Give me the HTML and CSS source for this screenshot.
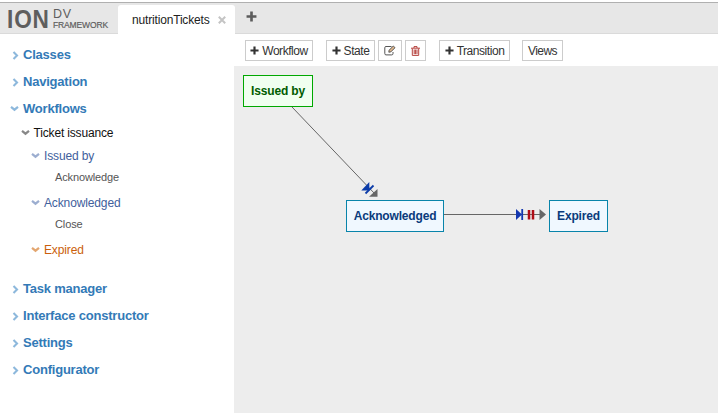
FILE: index.html
```html
<!DOCTYPE html>
<html lang="en">
<head>
<meta charset="utf-8">
<title>ION DV Framework</title>
<link rel="stylesheet" href="styles.css">
</head>
<body>
<svg class="defs" width="0" height="0">
  <symbol id="right" viewBox="0 0 8 9"><path d="M1.500 1 5 4.500 1.500 8" fill="none" stroke="currentColor" stroke-width="2.1"/></symbol>
  <symbol id="down" viewBox="0 0 9 8"><path d="M1 1.8 4.5 4.7 8 1.8" fill="none" stroke="currentColor" stroke-width="2.2"/></symbol>
  <symbol id="plus" viewBox="0 0 10 10"><path d="M5 .5v9M.5 5h9" fill="none" stroke="currentColor" stroke-width="2.4"/></symbol>
</svg>
<header class="topbar">
  <div class="logo"><span class="ion">ION</span><span class="sub"><span class="dv">DV</span><span class="fw">FRAMEWORK</span></span></div>
  <div class="tab"><span class="tab-name">nutritionTickets</span><svg class="close" viewBox="0 0 8 8"><path d="M.8.8 7.2 7.2M7.2.8.8 7.2"/></svg></div>
  <svg class="add"><use href="#plus"/></svg>
</header>
<div class="main">
  <nav class="sidebar">
    <div class="row top"><svg class="r"><use href="#right"/></svg><span>Classes</span></div>
    <div class="row top"><svg class="r"><use href="#right"/></svg><span>Navigation</span></div>
    <div class="row top"><svg class="d"><use href="#down"/></svg><span>Workflows</span></div>
    <div class="row flow"><svg class="d"><use href="#down"/></svg><span>Ticket issuance</span></div>
    <div class="row state"><svg class="d"><use href="#down"/></svg><span>Issued by</span></div>
    <div class="row trans"><span>Acknowledge</span></div>
    <div class="row state"><svg class="d"><use href="#down"/></svg><span>Acknowledged</span></div>
    <div class="row trans"><span>Close</span></div>
    <div class="row state current"><svg class="d"><use href="#down"/></svg><span>Expired</span></div>
    <div class="row top"><svg class="r"><use href="#right"/></svg><span>Task manager</span></div>
    <div class="row top"><svg class="r"><use href="#right"/></svg><span>Interface constructor</span></div>
    <div class="row top"><svg class="r"><use href="#right"/></svg><span>Settings</span></div>
    <div class="row top"><svg class="r"><use href="#right"/></svg><span>Configurator</span></div>
  </nav>
  <section class="content">
    <div class="toolbar">
      <div class="btn workflow"><svg class="p"><use href="#plus"/></svg>Workflow</div>
      <div class="btn state-btn"><svg class="p"><use href="#plus"/></svg>State</div>
      <div class="btn edit"><svg width="12" height="11" viewBox="0 0 12 11" fill="none" stroke="#555"><path d="M7.500 1.500H2Q.8 1.500.8 2.700V8.500Q.8 9.900 2 9.900H7.800Q9 9.900 9 8.500V7"/><path d="M4.800 7.200 5.200 5.200 9.300 1 11 2.700 6.800 6.900Z" fill="#e4b98c"/></svg></div>
      <div class="btn del"><svg width="9" height="10" viewBox="0 0 9 10" fill="none" stroke="#b5413c"><path d="M0 2.200H9M3 2V.6H6V2M1.300 2.500V9.400H7.700V2.500M3.200 3.500V8.200M4.600 3.500V8.200M6 3.500V8.200"/></svg></div>
      <div class="btn transition"><svg class="p"><use href="#plus"/></svg>Transition</div>
      <div class="btn views">Views</div>
    </div>
    <div class="canvas">
      <svg class="links" width="484" height="347" viewBox="234 66 484 347">
        <path d="M292 107 375 194M444 214.500H542" fill="none" stroke="#666"/>
        <path d="M377.500 189v7.800h-8.500z" fill="#666"/>
        <path d="M369.300 182v8.500h-8z" fill="#0b3ba8"/>
        <path d="M373.500 185.500 365.500 193.500" stroke="#0b3ba8" stroke-width="1.800"/>
        <path d="M516 209v11l6-5.500z" fill="#1438b0"/><path d="M522.200 209v11" stroke="#1438b0" stroke-width="1.800"/>
        <path d="M529 210v9.500M533 210v9.500" stroke="#b00c16" stroke-width="2.500"/>
        <path d="M539.500 209v11l6.500-5.500z" fill="#666"/>
      </svg>
      <div class="node start">Issued by</div>
      <div class="node ack">Acknowledged</div>
      <div class="node exp">Expired</div>
    </div>
  </section>
</div>
</body>
</html>
```

FILE: styles.css
```css
* { box-sizing: border-box; }
body { margin: 0; width: 718px; height: 413px; overflow: hidden; background: #fff; font-family: "Liberation Sans", Arial, sans-serif; font-size: 12px; color: #222; }
.defs { position: absolute; }
.topbar { height: 34px; padding-top: 3px; display: flex; background: linear-gradient(#fff 0 2px, #b0b0b0 2px 3px, #e7e7e7 3px); border-bottom: 1px solid #dadada; }
.logo { width: 118px; padding-left: 7px; display: flex; color: #5e5e5e; }
.ion { width: 46px; font-size: 26px; font-weight: bold; line-height: 32px; letter-spacing: 1px; transform: scaleX(.87); transform-origin: 0 0; }
.sub { display: flex; flex-direction: column; padding-top: 4px; }
.dv { font-size: 12.5px; line-height: 14px; letter-spacing: .8px; }
.fw { font-size: 8.5px; line-height: 9px; letter-spacing: -.13px; -webkit-text-stroke: .2px; }
.tab { width: 117px; height: 29px; margin-top: 2px; padding: 0 9px 0 14px; background: #fff; border-radius: 3px 3px 0 0; display: flex; align-items: center; justify-content: space-between; }
.tab-name { line-height: 28px; letter-spacing: -.17px; }
.close { width: 8px; height: 8px; fill: none; stroke: #c4c4c4; stroke-width: 2; }
.add { width: 11px; height: 11px; margin: 8px 0 0 11px; color: #5c5c5c; }
.main { display: flex; height: 379px; }
.sidebar { width: 234px; padding-top: 7px; }
.row { display: flex; align-items: center; }
.row svg { flex: none; }
.r { width: 8px; height: 9px; margin: 2px 3px 0 1px; }
.d { width: 9px; height: 8px; margin-right: 3px; }
.top { height: 27px; padding-left: 11px; color: #337ab7; font-size: 13px; font-weight: bold; letter-spacing: -.21px; }
.top svg { color: #8db8dc; }
.top .d { margin-left: -1px; margin-right: 4px; }
.flow { height: 21px; padding-left: 21px; color: #111; letter-spacing: -.16px; }
.flow .d { margin-left: -.5px; }
.flow svg, .state svg { margin-right: 4px; }
.flow svg { color: #888; }
.state { height: 26px; padding-left: 31px; color: #41609c; letter-spacing: -.13px; }
.state svg { color: #9caed0; }
.trans { height: 16px; padding-left: 55px; margin-bottom: 5px; color: #555; font-size: 11px; letter-spacing: -.12px; }
.current { color: #cb5f0c; margin-bottom: 12px; }
.current svg { color: #e3a670; }
.content { width: 484px; }
.toolbar { height: 32px; padding: 6px 0 0 11px; display: flex; }
.btn { height: 21px; border: 1px solid #ccc; display: flex; align-items: center; justify-content: center; font-size: 12px; letter-spacing: -.45px; color: #333; white-space: nowrap; }
.p { width: 9px; height: 9px; margin-right: 3px; flex: none; }
.workflow { width: 68px; margin-right: 13px; }
.state-btn { width: 49px; margin-right: 3px; }
.edit { width: 24px; margin-right: 3px; }
.del { width: 21px; margin-right: 13px; }
.transition { width: 71px; margin-right: 12px; }
.views { width: 41px; letter-spacing: -.55px; }
.canvas { position: relative; height: 347px; background: #ededed; }
.links { position: absolute; left: 0; top: 0; }
.node { position: absolute; height: 32px; line-height: 30px; border: 1px solid #0884aa; background: #f0f8ff; color: #0a3b7c; font-weight: bold; text-align: center; white-space: nowrap; letter-spacing: -.17px; }
.start { left: 9px; top: 9px; width: 70px; border-color: #00a800; background: #f0fff0; color: #005c00; }
.ack { left: 112px; top: 134px; width: 98px; }
.exp { left: 315px; top: 134px; width: 59px; }
```
